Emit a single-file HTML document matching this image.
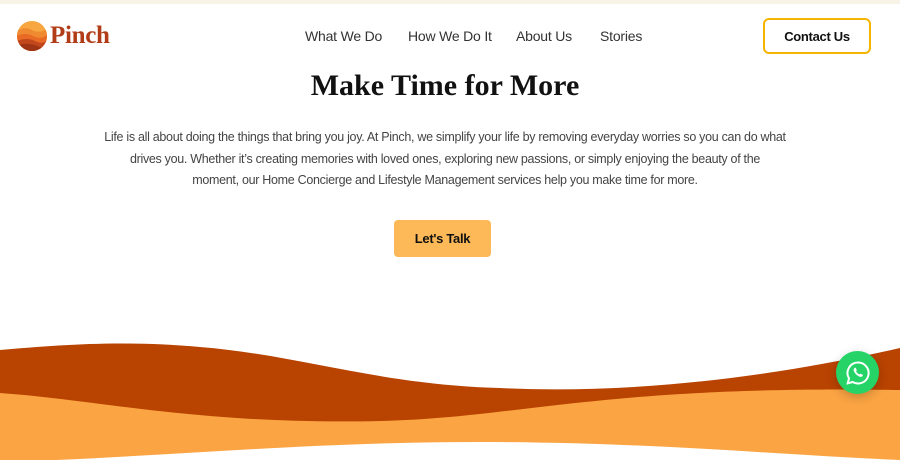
<!DOCTYPE html>
<html><head><meta charset="utf-8">
<style>
*{margin:0;padding:0;box-sizing:border-box}
body{width:900px;height:460px;overflow:hidden;background:#fff;font-family:"Liberation Sans",sans-serif;position:relative;color:#333}
.topline{position:absolute;top:0;left:0;width:900px;height:4px;background:#f7f3e6}
.logo{position:absolute;left:17px;top:21px;display:flex;align-items:center}
.logo span{font-family:"Liberation Serif",serif;font-weight:bold;font-size:25px;color:#b23c17;margin-left:3px;letter-spacing:-0.3px}
nav{position:absolute;top:28px;left:305px;font-size:14px;color:#333;letter-spacing:-0.2px}
nav a{position:absolute;white-space:nowrap;text-decoration:none;color:#333}
.contact{position:absolute;left:763px;top:18px;width:108px;height:36px;border:2px solid #f5b400;border-radius:6px;font-weight:bold;font-size:13px;color:#111;display:flex;align-items:center;justify-content:center;letter-spacing:-0.3px}
h1{position:absolute;top:69px;left:0;width:890px;text-align:center;font-family:"Liberation Serif",serif;font-size:30px;font-weight:bold;color:#111}
p{position:absolute;top:127px;left:0;width:890px;text-align:center;font-size:12.5px;letter-spacing:-0.3px;line-height:21.5px;color:#444;white-space:nowrap}
.talk{position:absolute;left:394px;top:220px;width:97px;height:37px;background:#fdb857;border-radius:4px;font-weight:bold;font-size:13px;color:#111;display:flex;align-items:center;justify-content:center;letter-spacing:-0.3px}
.wa{position:absolute;left:836px;top:351px;width:43px;height:43px;border-radius:50%;background:#25d366;box-shadow:0 3px 10px rgba(0,0,0,.2);display:flex;align-items:center;justify-content:center}
</style></head><body>
<div class="topline"></div>
<div class="logo">
<svg width="30" height="30" viewBox="0 0 30 30"><defs><clipPath id="c"><circle cx="15" cy="15" r="15"/></clipPath></defs>
<g clip-path="url(#c)"><rect width="30" height="30" fill="#f7a640"/>
<path d="M0 10 Q8 5 15 9 T30 8 V30 H0Z" fill="#f08a30"/>
<path d="M0 15 Q8 11 16 15 T30 14 V30 H0Z" fill="#e86a25"/>
<path d="M0 20 Q10 16 18 20 T30 19 V30 H0Z" fill="#c2461c"/>
<path d="M0 24 Q10 21 20 25 T30 24 V30 H0Z" fill="#9e3414"/></g></svg>
<span>Pinch</span></div>
<nav><a style="left:0">What We Do</a><a style="left:103px">How We Do It</a><a style="left:211px">About Us</a><a style="left:295px">Stories</a></nav>
<div class="contact">Contact Us</div>
<h1>Make Time for More</h1>
<p>Life is all about doing the things that bring you joy. At Pinch, we simplify your life by removing everyday worries so you can do what<br>drives you. Whether it’s creating memories with loved ones, exploring new passions, or simply enjoying the beauty of the<br>moment, our Home Concierge and Lifestyle Management services help you make time for more.</p>
<div class="talk">Let's Talk</div>
<svg style="position:absolute;left:0;top:330px" width="900" height="130" viewBox="0 0 900 130">
<path d="M0 20 C60 15 120 10 200 17 C300 25 380 55 500 58 C620 64 760 50 900 18 V130 H0Z" fill="#b94300"/>
<path d="M0 63 C100 70 200 95 380 91 C520 88 600 55 900 60 V130 H0Z" fill="#faa443"/>
<path d="M0 132 C150 128 300 112 480 112 C650 112 780 125 900 130 V131 H0Z" fill="#fff"/>
</svg>
<div class="wa"><svg width="26" height="26" viewBox="0 0 26 26"><path d="M13 2.5A10.5 10.5 0 0 0 4 18.4L2.7 23.3 7.7 22A10.5 10.5 0 1 0 13 2.5Z" fill="none" stroke="#fff" stroke-width="2"/><path d="M9.5 8c.5-.6 1.2-.5 1.4.1l.8 1.9c.1.4-.2.8-.6 1.2.6 1.4 1.9 2.6 3.2 3.2.4-.4.8-.8 1.2-.6l1.9.8c.6.3.6 1 .1 1.5-1 1-2.6 1-4.3-.1-1.8-1.1-3.4-2.8-4.2-4.5-.7-1.5-.4-2.8.5-3.5Z" fill="#fff"/></svg></div>
</body></html>
